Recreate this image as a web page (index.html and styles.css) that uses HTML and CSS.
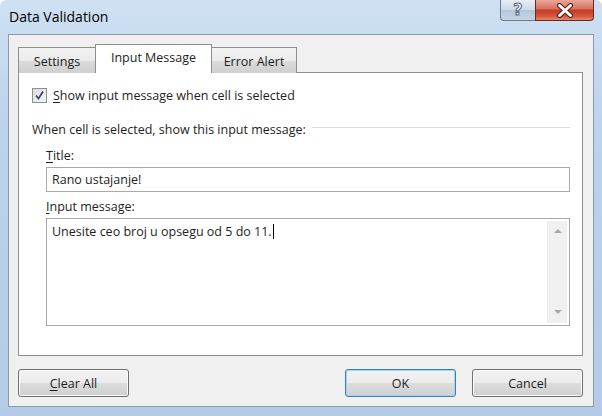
FILE: index.html
```html
<!DOCTYPE html>
<html>
<head>
<meta charset="utf-8">
<link rel="stylesheet" href="styles.css">
</head>
<body>
<div class="window">
  <div class="titlebar">
    <div class="title">Data Validation</div>
    <div class="caption">
      <div class="cap-btn help"><span>?</span></div>
      <div class="cap-btn close">
        <svg width="22" height="15" viewBox="0 0 22 15"><path d="M5.5 2.5 L16.5 12.5 M16.5 2.5 L5.5 12.5" stroke="#5a1a14" stroke-width="5" stroke-linecap="round"/><path d="M5.5 2.5 L16.5 12.5 M16.5 2.5 L5.5 12.5" stroke="#ffffff" stroke-width="3" stroke-linecap="round"/></svg>
      </div>
    </div>
  </div>
  <div class="client">
    <div class="tabs">
      <div class="tab t1">Settings</div>
      <div class="tab active t2">Input Message</div>
      <div class="tab t3">Error Alert</div>
    </div>
    <div class="panel">
      <label class="check-row">
        <span class="checkbox"><svg width="11" height="11" viewBox="0 0 11 11"><path d="M2 5.5 L4.5 8.5 L9 1.5" fill="none" stroke="#3b4a6b" stroke-width="1.8"/></svg></span>
        <span><u>S</u>how input message when cell is selected</span>
      </label>
      <div class="group">
        <span class="group-label">When cell is selected, show this input message:</span>
        <span class="group-line"></span>
      </div>
      <div class="field">
        <div class="field-label"><u>T</u>itle:</div>
        <div class="input">Rano ustajanje!</div>
        <div class="field-label gap"><u>I</u>nput message:</div>
        <div class="textarea">
          <div class="ta-text">Unesite ceo broj u opsegu od 5 do 11.<span class="caret"></span></div>
          <div class="scrollbar">
            <span class="arrow up"></span>
            <span class="arrow down"></span>
          </div>
        </div>
      </div>
    </div>
    <div class="buttons">
      <button class="btn"><u>C</u>lear All</button>
      <div class="right">
        <button class="btn default">OK</button>
        <button class="btn">Cancel</button>
      </div>
    </div>
  </div>
</div>
</body>
</html>
```
FILE: styles.css
```css
* { box-sizing: border-box; }
html, body { margin: 0; padding: 0; }
body {
  width: 602px;
  height: 416px;
  overflow: hidden;
  font-family: "Open Sans", "Noto Sans", sans-serif;
  font-size: 12.5px;
  color: #1e1e1e;
  background: #fff;
}
.window {
  width: 602px;
  height: 416px;
  padding: 0 8px 9px 8px;
  background: linear-gradient(180deg, #cfe0f3 0%, #bcd3ec 30%, #b3cbe6 100%);
  border-radius: 6px 6px 0 0;
  display: flex;
  flex-direction: column;
}
.titlebar {
  height: 34px;
  display: flex;
  justify-content: space-between;
  align-items: flex-start;
}
.title {
  font-size: 14px;
  color: #000;
  padding-top: 7px;
  padding-left: 1px;
}
.caption {
  display: flex;
}
.cap-btn {
  height: 21px;
  display: flex;
  align-items: center;
  justify-content: center;
  border: 1px solid #6b7a8f;
  border-top: none;
}
.help {
  width: 35px;
  border-radius: 0 0 0 4px;
  background: linear-gradient(180deg, #e6eef7 0%, #cbd8e7 50%, #b6c6da 51%, #c7d6e6 100%);
  border-right: none;
}
.help span {
  font-family: "DejaVu Sans", sans-serif;
  font-weight: bold;
  font-size: 16px;
  color: #fff;
  -webkit-text-stroke: 1px #56657a;
  margin-top: -1px;
}
.close {
  width: 59px;
  border-radius: 0 0 4px 0;
  background: linear-gradient(180deg, #e8a89b 0%, #d7705d 45%, #c23a22 50%, #d2553b 80%, #e38a6e 100%);
  border-color: #6a2a22;
}
.client {
  flex: 1;
  background: #f0f0f0;
  border: 1px solid #8d9aab;
  padding: 9px 10px 0 9px;
  display: flex;
  flex-direction: column;
}
.tabs {
  display: flex;
  align-items: flex-end;
  height: 29px;
  margin-bottom: -1px;
  position: relative;
  z-index: 1;
}
.tab {
  height: 26px;
  border: 1px solid #8c8e94;
  border-bottom: none;
  background: linear-gradient(180deg, #f3f3f3 0%, #ebebeb 50%, #dcdcdc 51%, #cfcfcf 100%);
  display: flex;
  align-items: center;
  justify-content: center;
  padding-top: 2px;
}
.t1 { width: 78px; margin-left: 0; }
.t2 { width: 117px; margin-left: -1px; }
.t3 { width: 86px; margin-left: -1px; }
.tab.active {
  height: 29px;
  background: #fff;
  padding: 0 0 4px 0;
  z-index: 2;
  position: relative;
}
.panel {
  height: 284px;
  background: #fff;
  border: 1px solid #8c8e94;
  padding: 14px 12px 0 13px;
}
.check-row {
  display: flex;
  align-items: center;
  gap: 6px;
  height: 16px;
}
.checkbox {
  width: 15px;
  height: 15px;
  border: 1px solid #8f8f8f;
  background: linear-gradient(135deg, #dcdcdc, #f6f6f6);
  display: flex;
  align-items: center;
  justify-content: center;
}
.group {
  display: flex;
  align-items: center;
  margin-top: 18px;
  height: 16px;
}
.group-line {
  flex: 1;
  height: 1px;
  background: #dcdcdc;
  margin-left: 6px;
  margin-top: -3px;
}
.field {
  padding-left: 14px;
}
.field-label {
  margin-top: 10px;
  height: 16px;
}
.field-label.gap { margin-top: 6px; }
.input {
  margin-top: 4px;
  height: 25px;
  border: 1px solid #a9a9a9;
  padding: 0 0 0 5px;
  display: flex;
  align-items: center;
}
.textarea {
  margin-top: 4px;
  height: 108px;
  border: 1px solid #a9a9a9;
  display: flex;
  padding: 2px 2px 2px 5px;
}
.ta-text {
  flex: 1;
  padding-top: 2px;
}
.caret {
  display: inline-block;
  width: 1px;
  height: 15px;
  background: #000;
  vertical-align: -3px;
  margin-left: 1px;
}
.scrollbar {
  width: 20px;
  background: #f0f0f0;
  border-left: 1px solid #ececec;
  display: flex;
  flex-direction: column;
  justify-content: space-between;
  align-items: center;
  padding: 8px 0 9px;
}
.arrow {
  width: 0;
  height: 0;
  border-left: 4px solid transparent;
  border-right: 4px solid transparent;
}
.arrow.up { border-bottom: 4px solid #a8a8a8; }
.arrow.down { border-top: 4px solid #a8a8a8; }
.buttons {
  margin-top: 13px;
  display: flex;
  justify-content: space-between;
}
.right {
  display: flex;
  gap: 16px;
}
.btn {
  width: 111px;
  height: 28px;
  font-family: inherit;
  font-size: 12.5px;
  color: #1e1e1e;
  border: 1px solid #707070;
  border-radius: 3px;
  background: linear-gradient(180deg, #f2f2f2 0%, #ebebeb 50%, #dddddd 51%, #cfcfcf 100%);
  padding: 0;
  box-shadow: inset 0 0 0 1px #fbfbfb;
}
.btn.default {
  border-color: #3c7fb1;
  box-shadow: inset 0 0 0 1px #9ed7f5;
}
u { text-decoration-thickness: 1px; text-underline-offset: 2px; }
```
